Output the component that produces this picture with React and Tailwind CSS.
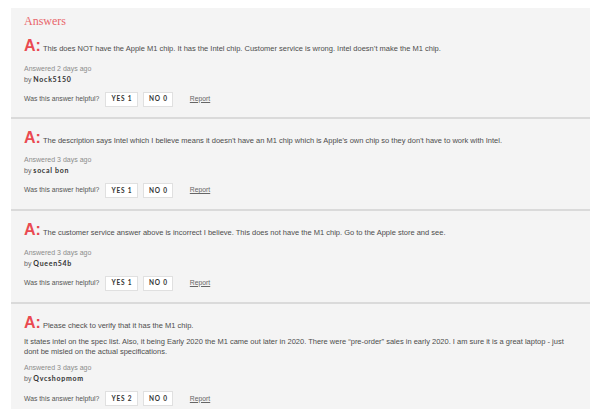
import React from "react";

const answers = [
  {
    text: "This does NOT have the Apple M1 chip. It has the Intel chip. Customer service is wrong. Intel doesn\u2019t make the M1 chip.",
    extra: null,
    ago: "2 days ago",
    by: "Nock5150",
    yes: 1,
    no: 0,
  },
  {
    text: "The description says Intel which I believe means it doesn't have an M1 chip which is Apple's own chip so they don't have to work with Intel.",
    extra: null,
    ago: "3 days ago",
    by: "socal bon",
    yes: 1,
    no: 0,
  },
  {
    text: "The customer service answer above is incorrect I believe. This does not have the M1 chip. Go to the Apple store and see.",
    extra: null,
    ago: "3 days ago",
    by: "Queen54b",
    yes: 1,
    no: 0,
  },
  {
    text: "Please check to verify that it has the M1 chip.",
    extra:
      "It states intel on the spec list. Also, it being Early 2020 the M1 came out later in 2020. There were \u201cpre-order\u201d sales in early 2020. I am sure it is a great laptop - just dont be misled on the actual specifications.",
    ago: "3 days ago",
    by: "Qvcshopmom",
    yes: 2,
    no: 0,
  },
];

function Answer({ a, first, last }) {
  return (
    <div
      className={`px-[13px] ${first ? "pt-[9.5px]" : "pt-[11px]"} ${first ? "pb-[10px]" : "pb-[11px]"} ${
        last ? "" : "border-b-2 border-[#dadada]"
      }`}
    >
      <div className="flex items-baseline h-[16px] leading-[16px]">
        <span className="text-[16px] font-bold text-[#ea4a51] font-['Liberation_Sans',Arial,sans-serif] mr-[2px]">
          A:
        </span>
        <span className="text-[7.5px] text-[#4d4d4d] font-['Liberation_Sans',Arial,sans-serif] whitespace-nowrap">
          {a.text}
        </span>
      </div>
      {a.extra && (
        <p className="mt-[6.4px] text-[7.5px] leading-[10px] text-[#4d4d4d] font-['Liberation_Sans',Arial,sans-serif] pr-[10px]">
          {a.extra}
        </p>
      )}
      <div
        className={`${a.extra ? "mt-[6.6px]" : "mt-[9.5px]"} text-[7px] leading-[10px] font-['Liberation_Sans',Arial,sans-serif]`}
      >
        <div className="text-[#8c8c8c]">Answered {a.ago}</div>
        <div className="text-[#666]">
          by{" "}
          <span className="font-['Lato',sans-serif] font-bold text-[#333] tracking-[0.1em]">
            {a.by}
          </span>
        </div>
      </div>
      <div className="mt-[7px] flex items-center h-[15px]">
        <span className="text-[6.8px] text-[#555] font-['Liberation_Sans',Arial,sans-serif]">
          Was this answer helpful?
        </span>
        <button className="ml-[6px] w-[33px] h-[15px] bg-white border border-[#e0e0e0] text-[6.5px] font-bold tracking-[0.12em] text-[#333] font-['Lato',sans-serif] flex items-center justify-center">
          YES {a.yes}
        </button>
        <button className="ml-[5px] w-[30px] h-[15px] bg-white border border-[#e0e0e0] text-[6.5px] font-bold tracking-[0.12em] text-[#333] font-['Lato',sans-serif] flex items-center justify-center">
          NO {a.no}
        </button>
        <span className="ml-[16.5px] text-[6.8px] text-[#666] underline font-['Liberation_Sans',Arial,sans-serif]">
          Report
        </span>
      </div>
    </div>
  );
}

export default function App() {
  return (
    <div className="w-[599px] h-[409px] bg-white overflow-hidden pt-[8px] pl-[11px]">
      <div className="w-[579px] h-[401px] bg-[#f4f4f4]">
        <div className="px-[13px] pt-[4.5px] h-[20.5px] leading-[16px] text-[12px] text-[#e9666b] font-['Liberation_Serif',serif]">
          Answers
        </div>
        {answers.map((a, i) => (
          <Answer key={i} a={a} first={i === 0} last={i === answers.length - 1} />
        ))}
      </div>
    </div>
  );
}
